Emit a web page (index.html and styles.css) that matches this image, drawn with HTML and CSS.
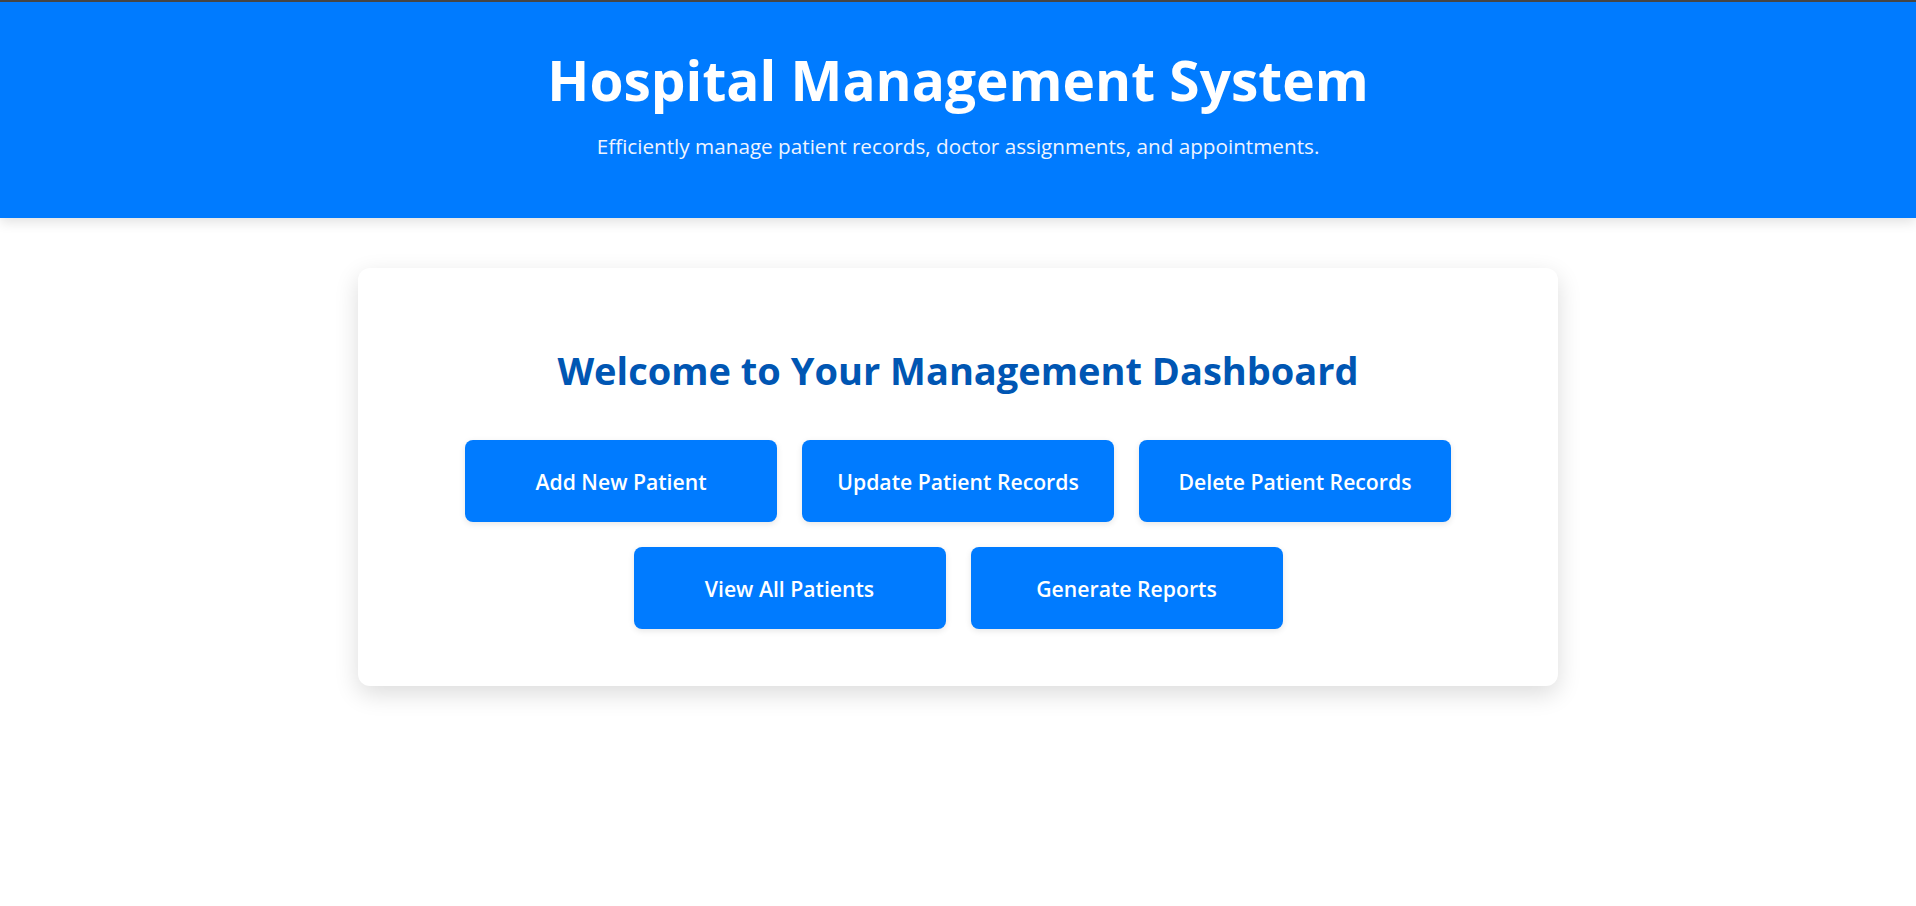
FILE: index.html
```html
<!DOCTYPE html>
<html lang="en">
<head>
<meta charset="UTF-8">
<title>Hospital Management System</title>
<link rel="stylesheet" href="styles.css">
</head>
<body>
<header class="site-header">
  <h1 class="site-title">Hospital Management System</h1>
  <p class="site-subtitle">Efficiently manage patient records, doctor assignments, and appointments.</p>
</header>
<main class="main">
  <section class="dashboard">
    <h2 class="dashboard-title">Welcome to Your Management Dashboard</h2>
    <div class="actions">
      <button class="action-btn">Add New Patient</button>
      <button class="action-btn">Update Patient Records</button>
      <button class="action-btn">Delete Patient Records</button>
      <button class="action-btn">View All Patients</button>
      <button class="action-btn">Generate Reports</button>
    </div>
  </section>
</main>
</body>
</html>
```
FILE: styles.css
```css
* { box-sizing: border-box; }
html, body { margin: 0; padding: 0; }
body {
  font-family: "Open Sans", "Noto Sans", "Liberation Sans", sans-serif;
  background: #ffffff;
  color: #333;
}
.site-header {
  background: #007bff;
  border-top: 2px solid #454545;
  color: #ffffff;
  text-align: center;
  padding: 40px 20px 57px;
  box-shadow: 0 4px 12px rgba(0, 0, 0, 0.12);
  position: relative;
}
.site-title {
  margin: 0;
  font-size: 55px;
  font-weight: 700;
  line-height: 76px;
}
.site-subtitle {
  margin: 13px 0 0;
  font-size: 20.7px;
  line-height: 30px;
  color: #eef4ff;
}
.main {
  display: flex;
  justify-content: center;
  padding: 50px 20px;
}
.dashboard {
  width: 1200px;
  background: #ffffff;
  border-radius: 12px;
  box-shadow: 0 8px 24px rgba(0, 0, 0, 0.14);
  padding: 75px 40px 57px;
  text-align: center;
}
.dashboard-title {
  margin: 0 0 42px;
  font-size: 38px;
  line-height: 55px;
  font-weight: 700;
  color: #0056b3;
}
.actions {
  display: flex;
  flex-wrap: wrap;
  justify-content: center;
  gap: 25px;
}
.action-btn {
  width: 312px;
  height: 82px;
  border: none;
  border-radius: 8px;
  background: #007bff;
  color: #ffffff;
  font-family: inherit;
  font-size: 21.2px;
  font-weight: 600;
  box-shadow: 0 2px 6px rgba(0, 0, 0, 0.1);
  cursor: pointer;
}
```
